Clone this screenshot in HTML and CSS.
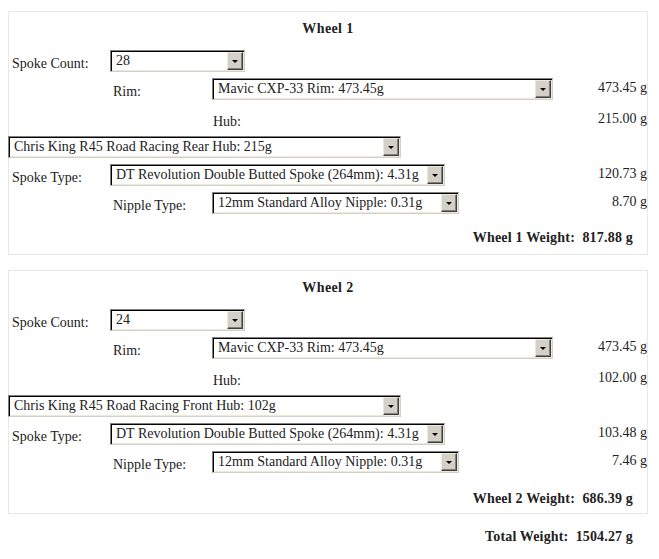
FILE: index.html
```html
<!DOCTYPE html>
<html>
<head>
<meta charset="utf-8">
<link rel="stylesheet" href="styles.css">
</head>
<body>
<div class="panel">
  <div class="title">Wheel 1</div>
  <div class="rows">
    <div class="row lvl1"><span class="label">Spoke Count:</span><div class="sel w-count"><span class="txt">28</span><span class="btn"></span></div></div>
    <div class="row lvl2"><span class="label">Rim:</span><div class="sel w-rim"><span class="txt">Mavic CXP-33 Rim: 473.45g</span><span class="btn"></span></div><span class="val">473.45 g</span></div>
    <div class="row hubrow"><span class="hublabel">Hub:</span><span class="val hubval">215.00 g</span></div>
    <div class="row hubsel"><div class="sel w-hub"><span class="txt">Chris King R45 Road Racing Rear Hub: 215g</span><span class="btn"></span></div></div>
    <div class="row lvl1"><span class="label">Spoke Type:</span><div class="sel w-spoke"><span class="txt">DT Revolution Double Butted Spoke (264mm): 4.31g</span><span class="btn"></span></div><span class="val">120.73 g</span></div>
    <div class="row lvl2"><span class="label">Nipple Type:</span><div class="sel w-nipple"><span class="txt">12mm Standard Alloy Nipple: 0.31g</span><span class="btn"></span></div><span class="val">8.70 g</span></div>
  </div>
  <div class="weight">Wheel 1 Weight:&nbsp; 817.88 g</div>
</div>
<div class="panel second">
  <div class="title">Wheel 2</div>
  <div class="rows">
    <div class="row lvl1"><span class="label">Spoke Count:</span><div class="sel w-count"><span class="txt">24</span><span class="btn"></span></div></div>
    <div class="row lvl2"><span class="label">Rim:</span><div class="sel w-rim"><span class="txt">Mavic CXP-33 Rim: 473.45g</span><span class="btn"></span></div><span class="val">473.45 g</span></div>
    <div class="row hubrow"><span class="hublabel">Hub:</span><span class="val hubval">102.00 g</span></div>
    <div class="row hubsel"><div class="sel w-hub"><span class="txt">Chris King R45 Road Racing Front Hub: 102g</span><span class="btn"></span></div></div>
    <div class="row lvl1"><span class="label">Spoke Type:</span><div class="sel w-spoke"><span class="txt">DT Revolution Double Butted Spoke (264mm): 4.31g</span><span class="btn"></span></div><span class="val">103.48 g</span></div>
    <div class="row lvl2"><span class="label">Nipple Type:</span><div class="sel w-nipple"><span class="txt">12mm Standard Alloy Nipple: 0.31g</span><span class="btn"></span></div><span class="val">7.46 g</span></div>
  </div>
  <div class="weight">Wheel 2 Weight:&nbsp; 686.39 g</div>
</div>
<div class="total">Total Weight:&nbsp; 1504.27 g</div>
</body>
</html>
```

FILE: styles.css
```css
html, body {
  background: #ffffff;
}
body {
  margin: 8px;
  font-family: "Liberation Serif", "Times New Roman", serif;
  font-size: 14px;
  line-height: 16px;
  color: #222222;
}
.panel {
  width: 640px;
  box-sizing: border-box;
  border: 1px solid #e8e8e8;
  margin-top: 3px;
  padding: 9px 0 8px 0;
}
.panel.second {
  margin-top: 15px;
  padding-bottom: 6px;
}
.panel.second .weight {
  margin-top: 18px;
}
.title {
  text-align: center;
  font-weight: bold;
  letter-spacing: 0.4px;
  margin-bottom: 13px;
}
.rows {
  display: flex;
  flex-direction: column;
  gap: 6px;
}
.row {
  display: flex;
  align-items: flex-start;
}
.lvl1 {
  padding-left: 3px;
}
.lvl1 .label {
  width: 98px;
}
.lvl2 {
  padding-left: 104px;
}
.lvl2 .label {
  width: 99px;
}
.label {
  flex: none;
  padding-top: 6px;
}
.hubrow {
  height: 24px;
  padding-left: 204px;
}
.hublabel {
  padding-top: 8px;
}
.hubsel {
  margin-left: -1px;
}
.val {
  margin-left: auto;
  padding-top: 2px;
  text-align: right;
}
.val.hubval {
  padding-top: 5px;
}
.sel {
  flex: none;
  height: 22px;
  box-sizing: border-box;
  display: flex;
  align-items: stretch;
  background: #ffffff;
  border-style: solid;
  border-width: 1px;
  border-color: #808080 #d4d0c8 #d4d0c8 #808080;
  box-shadow: inset 1px 1px 0 #000000, inset -1px -1px 0 #ece9d8;
  padding: 1px;
}
.sel .txt {
  flex: 1;
  padding-left: 4px;
  line-height: 18px;
  white-space: nowrap;
  overflow: hidden;
}
.sel .btn {
  flex: none;
  width: 16px;
  box-sizing: border-box;
  background: #d4d0c8;
  border-style: solid;
  border-width: 1px;
  border-color: #ece9d8 #404040 #404040 #ece9d8;
  box-shadow: inset -1px -1px 0 #808080;
  display: flex;
  align-items: center;
  justify-content: center;
}
.sel .btn::after {
  content: "";
  width: 0;
  height: 0;
  border-left: 3px solid transparent;
  border-right: 3px solid transparent;
  border-top: 3px solid #000000;
  margin-top: 1px;
}
.w-count { width: 135px; }
.w-rim { width: 341px; }
.w-hub { width: 393px; }
.w-spoke { width: 335px; }
.w-nipple { width: 247px; }
.weight {
  margin-top: 16px;
  text-align: right;
  font-weight: bold;
  letter-spacing: 0.2px;
  padding-right: 14px;
}
.total {
  width: 640px;
  box-sizing: border-box;
  margin-top: 15px;
  text-align: right;
  font-weight: bold;
  letter-spacing: 0.15px;
  padding-right: 15px;
}
```
